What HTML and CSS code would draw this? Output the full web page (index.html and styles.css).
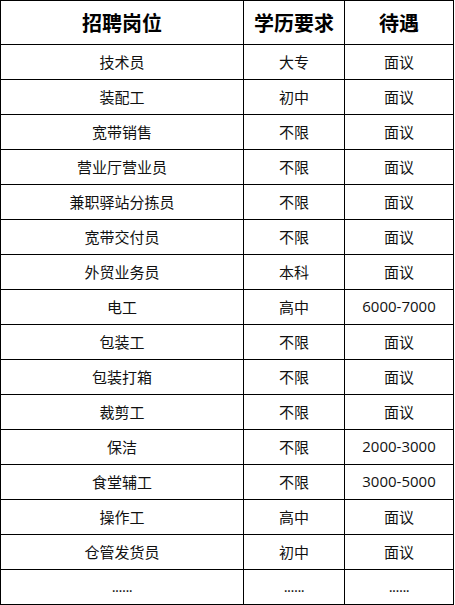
FILE: index.html
```html
<!DOCTYPE html>
<html lang="zh-CN">
<head>
<meta charset="utf-8">
<link rel="stylesheet" href="styles.css">
</head>
<body>
<table class="jobs">
  <colgroup>
    <col class="c1"><col class="c2"><col class="c3">
  </colgroup>
  <thead>
    <tr><th>招聘岗位</th><th>学历要求</th><th>待遇</th></tr>
  </thead>
  <tbody>
    <tr><td>技术员</td><td>大专</td><td>面议</td></tr>
    <tr><td>装配工</td><td>初中</td><td>面议</td></tr>
    <tr><td>宽带销售</td><td>不限</td><td>面议</td></tr>
    <tr><td>营业厅营业员</td><td>不限</td><td>面议</td></tr>
    <tr><td>兼职驿站分拣员</td><td>不限</td><td>面议</td></tr>
    <tr><td>宽带交付员</td><td>不限</td><td>面议</td></tr>
    <tr><td>外贸业务员</td><td>本科</td><td>面议</td></tr>
    <tr><td>电工</td><td>高中</td><td class="num">6000-7000</td></tr>
    <tr><td>包装工</td><td>不限</td><td>面议</td></tr>
    <tr><td>包装打箱</td><td>不限</td><td>面议</td></tr>
    <tr><td>裁剪工</td><td>不限</td><td>面议</td></tr>
    <tr><td>保洁</td><td>不限</td><td class="num">2000-3000</td></tr>
    <tr><td>食堂辅工</td><td>不限</td><td class="num">3000-5000</td></tr>
    <tr><td>操作工</td><td>高中</td><td>面议</td></tr>
    <tr><td>仓管发货员</td><td>初中</td><td>面议</td></tr>
    <tr><td class="dots">......</td><td class="dots">......</td><td class="dots">......</td></tr>
  </tbody>
</table>
</body>
</html>
```

FILE: styles.css
```css
html, body {
  margin: 0;
  padding: 0;
  background: #fff;
}

.jobs {
  border-collapse: collapse;
  table-layout: fixed;
  width: 453px;
  font-family: "Noto Sans CJK SC", "Noto Sans", sans-serif;
  color: #111;
}

.c1 { width: 243px; }
.c2 { width: 101px; }
.c3 { width: 109px; }

.jobs th,
.jobs td {
  border: 1px solid #000;
  padding: 0;
  text-align: center;
  vertical-align: middle;
}

.jobs th {
  height: 43px;
  font-size: 20px;
  font-weight: 700;
  color: #000;
  line-height: 1;
}

.jobs td {
  height: 33px;
  padding-bottom: 1px;
  font-size: 15px;
  line-height: 1;
}

.jobs td.num {
  font-family: "Open Sans", "Noto Sans", sans-serif;
  font-size: 15px;
}

.jobs td.dots {
  font-family: "Open Sans", sans-serif;
  font-size: 15px;
  letter-spacing: -0.5px;
}
```
